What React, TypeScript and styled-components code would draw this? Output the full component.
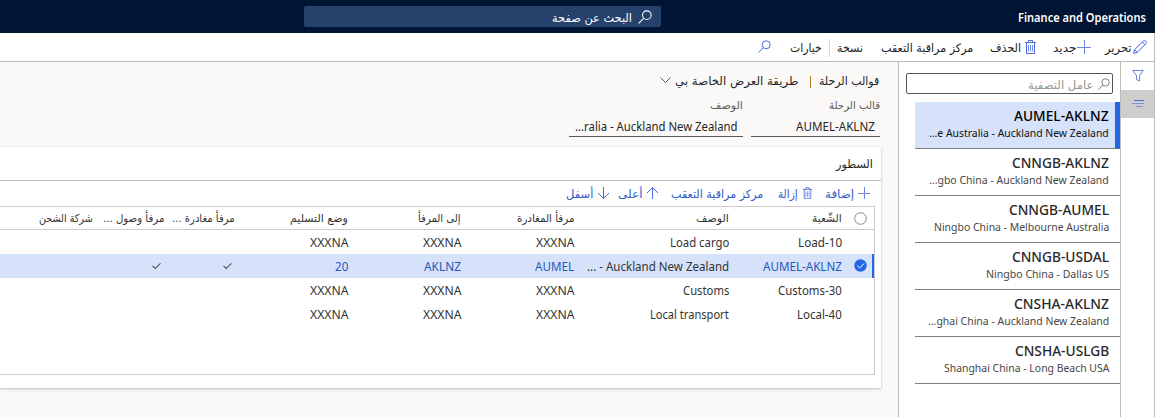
import React, { useLayoutEffect, useRef, useState } from "react";
import styled, { createGlobalStyle } from "styled-components";

const GlobalStyle = createGlobalStyle`
  * { box-sizing: border-box; }
  body {
    margin: 0;
    overflow: hidden;
    font-family: "Noto Sans", "DejaVu Sans", sans-serif;
    background: #fff;
  }
`;

type Tone = { $size?: number; $color?: string; $weight?: number; $ar?: boolean };

const FitBox = styled.span<{ $w: number }>`
  display: block;
  flex: none;
  width: ${(p) => p.$w}px;
  height: 18px;
  line-height: 18px;
  font-size: 11px;
  direction: ltr;
`;

const FitText = styled.span<Tone>`
  display: inline-block;
  white-space: nowrap;
  transform-origin: 0 50%;
  direction: ${(p) => (p.$ar ? "rtl" : "ltr")};
  font-family: ${(p) => (p.$ar ? '"DejaVu Sans"' : '"Noto Sans"')}, sans-serif;
  font-size: ${(p) => p.$size ?? 12}px;
  font-weight: ${(p) => p.$weight ?? 400};
  color: ${(p) => p.$color ?? "inherit"};
  line-height: 18px;
  vertical-align: top;
`;

/* Text condensed horizontally so that it fills its slot. */
function Fit({ w, children, size, color, weight }: { w: number; children: string; size?: number; color?: string; weight?: number }) {
  const ref = useRef<HTMLSpanElement>(null);
  const [scale, setScale] = useState(1);
  const arabic = /[\u0600-\u06ff]/.test(children);
  useLayoutEffect(() => {
    if (ref.current) setScale(w / ref.current.offsetWidth);
  }, [w, children]);
  return (
    <FitBox $w={w}>
      <FitText ref={ref} $ar={arabic} $size={size ?? (arabic ? 11.5 : 12.5)} $color={color} $weight={weight} style={{ transform: `scaleX(${scale})` }}>
        {children}
      </FitText>
    </FitBox>
  );
}

const Page = styled.div`
  width: 1155px;
  height: 417px;
  display: flex;
  flex-direction: column;
  direction: rtl;
  color: #242424;
  overflow: hidden;
`;

const TopBar = styled.header`
  height: 33px;
  flex: none;
  background: #001433;
  color: #fff;
  display: flex;
  align-items: center;
  padding-right: 9px;
  padding-top: 2px;
`;

const PageSearch = styled.div`
  width: 357px;
  height: 21px;
  margin: 0 357px 2px 0;
  border-radius: 2px;
  background: #26416b;
  display: flex;
  align-items: center;
  gap: 6px;
  padding: 2px 9px 0 0;
`;

const Shell = styled.div`
  flex: 1;
  min-height: 0;
  display: flex;
  flex-direction: column;
  border-right: 1px solid #bdbbb9;
`;

const CommandBar = styled.nav`
  height: 29px;
  flex: none;
  display: flex;
  align-items: center;
  padding: 2px 7px 0 0;
  background: #fff;
  border-bottom: 1px solid #bdbbb9;
`;

const Command = styled.div<{ $before?: number; $gap?: number }>`
  display: flex;
  align-items: center;
  gap: ${(p) => p.$gap ?? 2}px;
  margin-right: ${(p) => p.$before ?? 0}px;
`;

const Divider = styled.i`
  width: 1px;
  height: 18px;
  margin: 0 7px;
  background: #dddbd9;
`;

const Icon = styled.svg<{ $color?: string; $lift?: number }>`
  display: block;
  flex: none;
  fill: none;
  stroke: ${(p) => p.$color ?? "#4a67dc"};
  stroke-width: 1;
  overflow: visible;
  margin-bottom: ${(p) => p.$lift ?? 0}px;
`;

const Body = styled.div`
  flex: 1;
  min-height: 0;
  display: flex;
`;

const Rail = styled.aside`
  width: 34px;
  flex: none;
  border-left: 1px solid #bdbbb9;
  background: #fff;
`;

const RailButton = styled.div<{ $active?: boolean }>`
  height: 28px;
  display: flex;
  align-items: center;
  justify-content: center;
  background: ${(p) => (p.$active ? "#d0cecd" : "#fff")};
`;

const ListPane = styled.section`
  width: 222px;
  flex: none;
  border-left: 1px solid #bdbbb9;
  background: #fff;
  padding-top: 11px;
`;

const FilterBox = styled.div`
  width: 207px;
  height: 21px;
  margin: 0 7px 8px 0;
  border: 1px solid #555;
  border-radius: 2px;
  display: flex;
  align-items: center;
  gap: 4px;
  padding: 2px 2px 0 0;
`;

const RouteItem = styled.div<{ $active?: boolean }>`
  width: 205px;
  height: 47px;
  padding: 5px ${(p) => (p.$active ? 6 : 11)}px 0 0;
  border-bottom: 1px solid #808080;
  border-right: ${(p) => (p.$active ? "5px solid #2266e3" : "0")};
  background: ${(p) => (p.$active ? "#d6e2fa" : "#fff")};
  color: ${(p) => (p.$active ? "#000" : "#292827")};
`;

const RouteName = styled.div`
  margin-top: -1px;
`;

const Main = styled.main`
  flex: 1;
  min-width: 0;
  background: #faf9f8;
`;

const Heading = styled.div`
  display: flex;
  align-items: center;
  padding: 10px 19px 0 0;
  height: 28px;
`;

const Pipe = styled.i`
  width: 1px;
  height: 12px;
  margin: 2px 8px 0 11px;
  background: #b07c1c;
`;

const Fields = styled.div`
  display: flex;
  gap: 8px;
  padding: 7px 18px 0 0;
`;

const Field = styled.div<{ $w: number }>`
  width: ${(p) => p.$w}px;
  height: 40px;
  border-bottom: 1px solid #5c5a58;
`;

const FieldValue = styled.div`
  padding: 3px 5px 0 0;
`;

const Card = styled.section`
  height: 241px;
  margin: 10px 17px 0 0;
  background: #fff;
  border-top-right-radius: 2px;
  box-shadow: 0 1px 3px rgba(0, 0, 0, 0.25);
`;

const CardTitle = styled.div`
  height: 34px;
  padding: 8px 8px 0 0;
  border-bottom: 1px solid #bdbbb9;
`;

const LineTools = styled.div`
  height: 25px;
  display: flex;
  align-items: center;
  padding-right: 11px;
`;

const Table = styled.div`
  height: 169px;
  margin-right: 6px;
  border: 1px solid #cccaca;
  border-left: 0;
`;

const Row = styled.div<{ $active?: boolean; $head?: boolean }>`
  height: ${(p) => (p.$head ? 23 : 24)}px;
  display: grid;
  grid-template-columns: 32px 113px 155px 113px 113px 113px 71px 71px 1fr;
  align-items: center;
  color: #333;
  background: ${(p) => (p.$active ? "#d6e2fa" : "#fff")};
  ${(p) => p.$head && "border-bottom: 1px solid #cccaca;"}
  ${(p) => p.$active && "box-shadow: inset -2px 0 0 #2266e3;"}
`;

const Cell = styled.div`
  display: flex;
  align-items: center;
  min-width: 0;
  padding-top: 2px;
`;

const SelectCell = styled(Cell)`
  padding: 0 7px 0 0;
`;

const Search = ({ size = 13, color, lift }: { size?: number; color?: string; lift?: number }) => (
  <Icon $color={color} $lift={lift} width={size} height={size} viewBox="0 0 13 13">
    <circle cx="8.2" cy="4.8" r="4" />
    <path d="M5.3 7.7 L0.5 12.5" />
  </Icon>
);
const Plus = ({ size = 14 }: { size?: number }) => (
  <Icon width={size} height={size} viewBox={`0 0 ${size} ${size}`} $color="#6f87df" $lift={2}>
    <path d={`M${size / 2 + 0.5} 0v${size}M0 ${size / 2 + 0.5}h${size}`} />
  </Icon>
);
const Trash = ({ w = 11, h = 14 }: { w?: number; h?: number }) => (
  <Icon width={w} height={h} viewBox="0 0 11 14" $lift={2}>
    <path d="M0 2.5h11M3.5 2.5v-2h4v2M1.5 2.5v11h8v-11" />
    <path d="M3.5 5v6.5M5.5 5v6.5M7.5 5v6.5" strokeOpacity="0.75" />
  </Icon>
);
const Pencil = () => (
  <Icon width="14" height="14" viewBox="0 0 14 14" $lift={2}>
    <path d="M0.6 13.4 L1.6 9.6 L10.5 0.9 Q11.7 0.1 12.8 1.2 Q13.9 2.4 13.1 3.5 L4.3 12.4 Z M9.3 2.1 L11.9 4.7 M1.6 9.6 L4.3 12.4" />
  </Icon>
);
const Arrow = ({ down }: { down?: boolean }) => (
  <Icon width="12" height="12" viewBox="0 0 12 12" $lift={2}>
    <path d={down ? "M6.5 0v11.5M1 6L6.5 11.5l5.5-5.5" : "M6.5 12V0.5M1 6L6.5 0.5l5.5 5.5"} />
  </Icon>
);
const Check = () => (
  <Icon width="9" height="6" viewBox="0 0 9 6" $color="#555" $lift={3}><path d="M0.5 2.8L3.1 5.4L8.5 0.4" strokeWidth="1.1" /></Icon>
);

type Entry = [string, number, string, number];
const routes: Entry[] = [
  ["AUMEL-AKLNZ", 95, "...e Australia - Auckland New Zealand", 180],
  ["CNNGB-AKLNZ", 97, "...gbo China - Auckland New Zealand", 180],
  ["CNNGB-AUMEL", 100, "Ningbo China - Melbourne Australia", 175],
  ["CNNGB-USDAL", 97, "Ningbo China - Dallas US", 123],
  ["CNSHA-AKLNZ", 95, "...ghai China - Auckland New Zealand", 181],
  ["CNSHA-USLGB", 94, "Shanghai China - Long Beach USA", 165],
];

const columns: [string, number][] = [
  ["الشّعبة", 30],
  ["الوصف", 33],
  ["مرفأ المغادرة", 57],
  ["إلى المرفأ", 43],
  ["وضع التسليم", 58],
  ["مرفأ مغادرة ...", 63],
  ["مرفأ وصول ...", 61],
  ["شركة الشحن", 54],
];

const lines: { active?: boolean; cells: [string, number][] }[] = [
  { cells: [["Load-10", 44], ["Load cargo", 59], ["XXXNA", 38], ["XXXNA", 38], ["XXXNA", 38]] },
  { active: true, cells: [["AUMEL-AKLNZ", 79], ["... - Auckland New Zealand", 142], ["AUMEL", 39], ["AKLNZ", 37], ["20", 13]] },
  { cells: [["Customs-30", 64], ["Customs", 46], ["XXXNA", 38], ["XXXNA", 38], ["XXXNA", 38]] },
  { cells: [["Local-40", 45], ["Local transport", 79], ["XXXNA", 38], ["XXXNA", 38], ["XXXNA", 38]] },
];

export default function App() {
  return (
    <Page>
      <GlobalStyle />
      <TopBar>
        <Fit w={128} size={12} weight={600}>Finance and Operations</Fit>
        <PageSearch>
          <Search size={14} color="#fff" lift={1} />
          <Fit w={80}>البحث عن صفحة</Fit>
        </PageSearch>
      </TopBar>
      <Shell>
        <CommandBar>
          <Command $gap={1}><Pencil /><Fit w={27}>تحرير</Fit></Command>
          <Command $before={14} $gap={1}><Plus /><Fit w={23}>جديد</Fit></Command>
          <Command $before={17} $gap={4}><Trash /><Fit w={31}>الحذف</Fit></Command>
          <Command $before={17}><Fit w={92}>مركز مراقبة التعقب</Fit></Command>
          <Command $before={18}><Fit w={26}>نسخة</Fit></Command>
          <Divider />
          <Command><Fit w={32}>خيارات</Fit></Command>
          <Command $before={19}><Search lift={3} /></Command>
        </CommandBar>
        <Body>
          <Rail>
            <RailButton>
              <Icon width="12" height="12" viewBox="0 0 12 12" $color="#6a7fe0"><path d="M0.7 0.5h10.6L7.5 5.5v5.5l-3-1.5v-4z" /></Icon>
            </RailButton>
            <RailButton $active>
              <Icon width="12" height="8" viewBox="0 0 12 8" $lift={2}>
                <path d="M2 1.5h10" />
                <path d="M0 4.5h12M4 7.5h7" strokeOpacity="0.6" />
              </Icon>
            </RailButton>
          </Rail>
          <ListPane>
            <FilterBox>
              <Search size={12} color="#777" lift={2} />
              <Fit w={66} color="#979593">عامل التصفية</Fit>
            </FilterBox>
            {routes.map(([code, cw, name, nw], i) => (
              <RouteItem key={code} $active={i === 0}>
                <Fit w={cw} size={14} weight={500}>{code}</Fit>
                <RouteName>
                  <Fit w={nw} size={11.5} color={i === 0 ? "#111" : "#484644"}>{name}</Fit>
                </RouteName>
              </RouteItem>
            ))}
          </ListPane>
          <Main>
            <Heading>
              <Fit w={60}>قوالب الرحلة</Fit>
              <Pipe />
              <Fit w={124}>طريقة العرض الخاصة بي</Fit>
              <Command $before={4}>
                <Icon $color="#555" $lift={2} width="11" height="6" viewBox="0 0 11 6"><path d="M0.5 0.5l5 5l5-5" /></Icon>
              </Command>
            </Heading>
            <Fields>
              <Field $w={129}>
                <Fit w={51} size={11} color="#605e5c">قالب الرحلة</Fit>
                <FieldValue><Fit w={79}>AUMEL-AKLNZ</Fit></FieldValue>
              </Field>
              <Field $w={174}>
                <Fit w={33} size={11} color="#605e5c">الوصف</Fit>
                <FieldValue><Fit w={163}>...ralia - Auckland New Zealand</Fit></FieldValue>
              </Field>
            </Fields>
            <Card>
              <CardTitle><Fit w={37} weight={500}>السطور</Fit></CardTitle>
              <LineTools>
                <Command $gap={4}><Plus size={12} /><Fit w={29} color="#2f5bc8">إضافة</Fit></Command>
                <Command $before={13} $gap={5}><Trash w={9} h={12} /><Fit w={20} color="#2f5bc8">إزالة</Fit></Command>
                <Command $before={15}><Fit w={92} color="#2f5bc8">مركز مراقبة التعقب</Fit></Command>
                <Command $before={13} $gap={4}><Arrow /><Fit w={24} color="#2f5bc8">أعلى</Fit></Command>
                <Command $before={9} $gap={4}><Arrow down /><Fit w={27} color="#2f5bc8">أسفل</Fit></Command>
              </LineTools>
              <Table>
                <Row $head>
                  <SelectCell>
                    <Icon $color="#888" width="13" height="13" viewBox="0 0 13 13"><circle cx="6.5" cy="6.5" r="5.8" /></Icon>
                  </SelectCell>
                  {columns.map(([label, w]) => (
                    <Cell key={label}><Fit w={w} size={11}>{label}</Fit></Cell>
                  ))}
                </Row>
                {lines.map((line, r) => (
                  <Row key={r} $active={line.active}>
                    <SelectCell>
                      {line.active && (
                        <Icon $color="#fff" $lift={1} width="13" height="13" viewBox="0 0 13 13">
                          <circle cx="6.5" cy="6.5" r="6.2" fill="#2266e3" stroke="none" />
                          <path d="M3.2 6.7L5.6 9L10 4.5" />
                        </Icon>
                      )}
                    </SelectCell>
                    {line.cells.map(([text, w], c) => (
                      <Cell key={c}><Fit w={w} color={line.active && c !== 1 ? "#2458b8" : undefined}>{text}</Fit></Cell>
                    ))}
                    <Cell>{line.active && <Command $before={3}><Check /></Command>}</Cell>
                    <Cell>{line.active && <Command $before={3}><Check /></Command>}</Cell>
                  </Row>
                ))}
              </Table>
            </Card>
          </Main>
        </Body>
      </Shell>
    </Page>
  );
}
